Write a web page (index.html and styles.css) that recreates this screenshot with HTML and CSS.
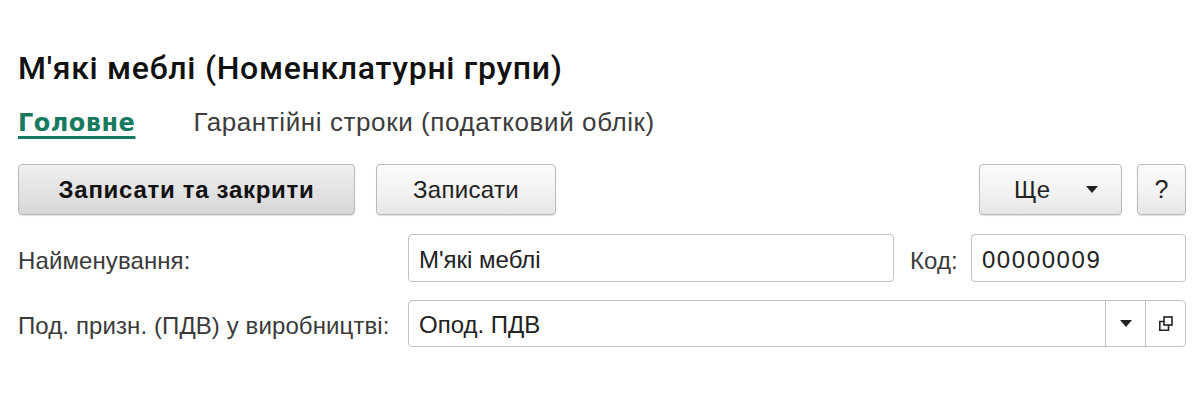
FILE: index.html
```html
<!DOCTYPE html>
<html lang="uk">
<head>
  <meta charset="UTF-8" />
  <title>М'які меблі (Номенклатурні групи)</title>
  <link rel="stylesheet" href="styles.css">
</head>
<body>
  <main class="form-page">
    <h1 class="title">М'які меблі (Номенклатурні групи)</h1>

    <nav class="tabs">
      <a href="#" class="tab active">Головне</a>
      <a href="#" class="tab">Гарантійні строки (податковий облік)</a>
    </nav>

    <div class="toolbar">
      <button class="btn btn-default">Записати та закрити</button>
      <button class="btn btn-save">Записати</button>
      <div class="spacer"></div>
      <button class="btn btn-more">Ще <span class="caret"></span></button>
      <button class="btn btn-help">?</button>
    </div>

    <div class="form-row">
      <label class="field-label">Найменування:</label>
      <div class="field field-name">М'які меблі</div>
      <label class="field-label code-label">Код:</label>
      <div class="field field-code">00000009</div>
    </div>

    <div class="form-row">
      <label class="field-label">Под. призн. (ПДВ) у виробництві:</label>
      <div class="field field-select">
        <span class="field-value">Опод. ПДВ</span>
        <span class="field-btn"><span class="caret"></span></span>
        <span class="field-btn">
          <!-- open-in-window icon -->
          <svg width="16" height="16" viewBox="0 0 16 16">
            <rect x="6" y="1" width="8" height="8" fill="#fff" stroke="#222" stroke-width="1.6"/>
            <path d="M6 5.5 H1.8 V14.2 H10.5 V9" fill="none" stroke="#222" stroke-width="1.6"/>
          </svg>
        </span>
      </div>
    </div>
  </main>
</body>
</html>
```

FILE: styles.css
```css
* {
  box-sizing: border-box;
}

body {
  margin: 0;
  background: #fff;
  color: #333;
  font-family: "Liberation Sans", Arial, sans-serif;
}

.form-page {
  padding: 50px 14px 0 18px;
}

.title {
  margin: 0;
  font-family: Roboto, "Liberation Sans", sans-serif;
  font-weight: 500;
  font-size: 32px;
  letter-spacing: 0.7px;
  line-height: 36px;
  color: #111;
}

.tabs {
  display: flex;
  align-items: baseline;
  gap: 58px;
  margin-top: 22px;
  height: 28px;
}

.tab {
  font-size: 26px;
  letter-spacing: 0.6px;
  line-height: 28px;
  color: #3c3c3c;
  text-decoration: none;
}

.tab.active {
  font-family: "DejaVu Sans", sans-serif;
  font-weight: 700;
  font-size: 24px;
  letter-spacing: 0.5px;
  color: #177a60;
  text-decoration: underline;
  text-decoration-thickness: 3px;
  text-underline-offset: 5px;
}

.toolbar {
  display: flex;
  align-items: center;
  gap: 21px;
  margin-top: 28px;
}

.spacer {
  flex: 1;
}

.btn {
  height: 51px;
  padding: 0 20px;
  border: 1px solid #b9b9b9;
  border-radius: 4px;
  background: linear-gradient(to bottom, #fbfbfb, #f3f3f3 50%, #e6e6e9);
  box-shadow: 0 1px 1px rgba(0, 0, 0, 0.12);
  font-family: "Liberation Sans", Arial, sans-serif;
  font-size: 24px;
  letter-spacing: 0.3px;
  color: #222;
  cursor: pointer;
}

.btn-default {
  width: 337px;
  font-weight: 700;
  letter-spacing: 0.7px;
  color: #111;
  background: linear-gradient(to bottom, #f0f0f0, #e3e3e3 50%, #d6d6d6);
}

.btn-save {
  width: 180px;
}

.btn-more {
  width: 143px;
  display: flex;
  align-items: center;
  justify-content: space-between;
  padding: 0 23px 0 34px;
  margin-right: -6px;
}

.btn-help {
  width: 49px;
  padding: 0;
  font-size: 25px;
}

.caret {
  display: inline-block;
  width: 0;
  height: 0;
  border-left: 6px solid transparent;
  border-right: 6px solid transparent;
  border-top: 7px solid #222;
}

.form-row {
  display: flex;
  align-items: center;
  margin-top: 19px;
}

.form-row + .form-row {
  margin-top: 18px;
}

.field-label {
  width: 390px;
  padding-top: 5px;
  font-size: 24px;
  letter-spacing: 0.1px;
  color: #3a3a3a;
}

.code-label {
  width: auto;
  margin: 0 13px 0 16px;
}

.field {
  height: 48px;
  border: 1px solid #c2c2c2;
  border-radius: 4px;
  background: #fff;
  font-size: 24px;
  padding: 3px 10px 0;
  line-height: 43px;
  color: #222;
}

.field-name {
  width: 486px;
}

.field-code {
  flex: 1;
  letter-spacing: 1.6px;
}

.field-select {
  flex: 1;
  display: flex;
  height: 47px;
  padding: 0;
}

.field-value {
  flex: 1;
  padding: 3px 10px 0;
  line-height: 42px;
}

.field-btn {
  width: 40px;
  display: flex;
  align-items: center;
  justify-content: center;
  border-left: 1px solid #c2c2c2;
}
```
